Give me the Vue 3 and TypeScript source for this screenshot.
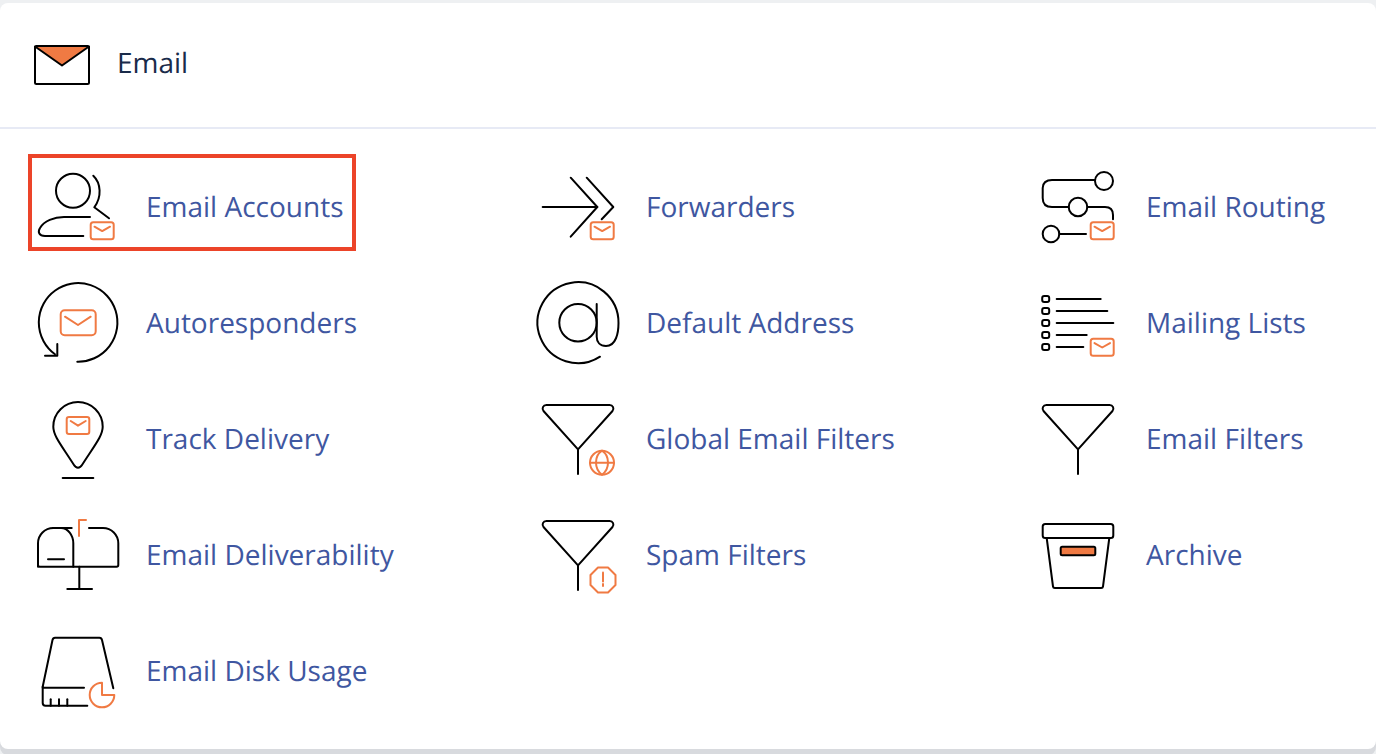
<template>
  <div class="page">
    <section class="card">
      <header class="head">
        <svg class="head-icon" viewBox="0 0 56 40">
          <path class="flap" d="M1 1.5 H55 L28 20.5 Z" />
          <rect class="ink" x="1" y="1" width="54" height="38" rx="1.5" />
          <path class="ink" d="M1 1.5 L28 20.5 L55 1.5" />
        </svg>
        <h2>Email</h2>
      </header>
      <div class="grid">
        <a v-for="tool in tools" :key="tool.name" class="tool" :class="{ picked: tool.picked }" href="#">
          <svg class="tool-icon" viewBox="0 0 100 100">
            <path v-for="d in tool.ink" :key="d" class="ink" :d="d" />
            <path v-if="tool.bar" class="bar" :d="tool.bar" />
            <path v-for="d in tool.accent" :key="d" class="accent" :d="d" />
          </svg>
          <span>{{ tool.name }}</span>
        </a>
      </div>
    </section>
  </div>
</template>

<script setup lang="ts">
interface Tool {
  name: string;
  ink: string[];
  accent: string[];
  bar?: string;
  picked?: boolean;
}

function circle(cx: number, cy: number, r: number) {
  return `M${cx - r} ${cy} a${r} ${r} 0 1 0 ${r * 2} 0 a${r} ${r} 0 1 0 ${-r * 2} 0 Z`;
}

// the little orange envelope in the lower right of most icons
const badge = (y = 65.3) => [
  `M65.2 ${y} H83.2 a2.5 2.5 0 0 1 2.5 2.5 V${y + 14.5} a2.5 2.5 0 0 1 -2.5 2.5 H65.2 a2.5 2.5 0 0 1 -2.5 -2.5 V${y + 2.5} a2.5 2.5 0 0 1 2.5 -2.5 Z`,
  `M66.5 ${y + 4.4} L74.2 ${y + 8.8} L82 ${y + 4.4}`
];

const funnel = 'M18.5 16 H81.5 C85 16 86.5 19.5 84.5 22 L50 60.3 L15.5 22 C13.5 19.5 15 16 18.5 16 Z M50 60.3 V85';

const tools: Tool[] = [
  {
    name: 'Email Accounts',
    picked: true,
    ink: [
      circle(45, 33.7, 17),
      'M65.3 18.7 C73 26 74 40 66.3 50.3 L81 61.3',
      'M55.3 79 H17 C11 79 9.5 75 12 71 C16 64 26 60 36 60 H62'
    ],
    accent: badge()
  },
  {
    name: 'Forwarders',
    ink: ['M14.7 50 H69.3', 'M42.7 20.7 L69.3 50 L42.7 79.7', 'M58.7 20.7 L85.3 50 L73.7 62.3'],
    accent: badge()
  },
  {
    name: 'Email Routing',
    ink: [
      circle(76, 24, 9),
      'M67 23 H24 C18 23 14.7 26 14.7 31 V41 C14.7 47 18 50 24 50 H40.7',
      circle(50, 50, 9.3),
      'M59.3 50 H77 C82 50 85 53 85 58 V62.3',
      circle(23, 77, 8.3),
      'M31.3 77 H58'
    ],
    accent: badge()
  },
  {
    name: 'Autoresponders',
    ink: ['M49.3 88.7 A39.3 39.3 0 1 0 27 81.2', 'M29.3 71 V82.7 H17'],
    accent: [
      'M36.7 37.3 H63.7 a4 4 0 0 1 4 4 V58.3 a4 4 0 0 1 -4 4 H36.7 a4 4 0 0 1 -4 -4 V41.3 a4 4 0 0 1 4 -4 Z',
      'M37 43.7 L50 52 L62.7 43.7'
    ]
  },
  {
    name: 'Default Address',
    ink: [
      'M72 83.7 A40.5 40.5 0 1 1 90.5 50 C90.5 60 88 73 78 73 C72 73 68.7 69 68.7 63.7 V31',
      circle(50, 49.7, 18.7)
    ],
    accent: []
  },
  {
    name: 'Mailing Lists',
    ink: [
      ...[26, 38, 50, 62, 74].map((y) => `M16.2 ${y - 3} h3 a2 2 0 0 1 2 2 v2 a2 2 0 0 1 -2 2 h-3 a2 2 0 0 1 -2 -2 v-2 a2 2 0 0 1 2 -2 Z`),
      'M28.7 26 H72.7',
      'M28.7 38 H79.3',
      'M28.7 50 H85.3',
      'M28.7 62 H58.7',
      'M28.7 74 H55.3'
    ],
    accent: badge(65.7)
  },
  {
    name: 'Track Delivery',
    ink: [
      'M50 13 A24.7 24.7 0 0 1 74.7 37.7 C74.7 47 66 57 54 76 C52 79.5 48 79.5 46 76 C34 57 25.3 47 25.3 37.7 A24.7 24.7 0 0 1 50 13 Z',
      'M34.7 89 H65.3'
    ],
    accent: [
      'M41 28 H59 a2.3 2.3 0 0 1 2.3 2.3 V42.7 a2.3 2.3 0 0 1 -2.3 2.3 H41 a2.3 2.3 0 0 1 -2.3 -2.3 V30.3 a2.3 2.3 0 0 1 2.3 -2.3 Z',
      'M42.7 32 L50 36.7 L57.7 32'
    ]
  },
  {
    name: 'Global Email Filters',
    ink: [funnel],
    accent: [circle(74, 73.7, 12), 'M62 73.7 H86', 'M74 61.7 C66 67 66 80 74 85.7 C82 80 82 67 74 61.7 Z']
  },
  { name: 'Email Filters', ink: [funnel], accent: [] },
  {
    name: 'Email Deliverability',
    ink: [
      'M10 61.7 V38.3 A15.3 15.3 0 0 1 25.3 23 H33 A12.5 15.3 0 0 1 45.3 38.3 V61.7',
      'M25 23 H43.7',
      'M61 23 H75 A15.3 15.3 0 0 1 90.3 38.3 V60 Q90.3 61.7 88.6 61.7 H11.7 Q10 61.7 10 60',
      'M20 54.3 H36',
      'M51.3 61.7 V84',
      'M39.3 84 H64'
    ],
    accent: ['M51 31 V15 H58']
  },
  {
    name: 'Spam Filters',
    ink: [funnel],
    accent: ['M70 62.5 H80 L87.5 70 V80 L80 87.5 H70 L62.5 80 V70 Z', 'M75 67.5 V76.5', 'M75 79 V81']
  },
  {
    name: 'Archive',
    ink: [
      'M17.2 19 H82.8 a2.5 2.5 0 0 1 2.5 2.5 V30.5 a2.5 2.5 0 0 1 -2.5 2.5 H17.2 a2.5 2.5 0 0 1 -2.5 -2.5 V21.5 a2.5 2.5 0 0 1 2.5 -2.5 Z',
      'M18.7 33 L25 81.5 Q25.2 83 26.8 83 H73.2 Q74.8 83 75 81.5 L81.3 33'
    ],
    bar: 'M34.2 41.7 H65.8 a1.5 1.5 0 0 1 1.5 1.5 V48.8 a1.5 1.5 0 0 1 -1.5 1.5 H34.2 a1.5 1.5 0 0 1 -1.5 -1.5 V43.2 a1.5 1.5 0 0 1 1.5 -1.5 Z',
    accent: []
  },
  {
    name: 'Email Disk Usage',
    ink: [
      'M14.7 65.7 L24.5 19 Q25 16.7 27 16.7 H71.5 Q73.5 16.7 74 19 L85.3 67.3',
      'M14.7 66.7 H56',
      'M14.7 65.7 V82 Q14.7 84.7 17.5 84.7 H59.3',
      'M22.7 78.3 V84.7',
      'M31 78.3 V84.7',
      'M39.3 78.3 V84.7'
    ],
    accent: ['M74 74 V61.7 A12.3 12.3 0 1 0 86.3 74 Z']
  }
];
</script>

<style scoped>
.page {
  padding: 3px 0 5px;
  height: 754px;
  box-sizing: border-box;
  font-family: "Open Sans", "Noto Sans", sans-serif;
  text-rendering: geometricPrecision;
  font-kerning: normal;
}

.card {
  height: 100%;
  background: #fff;
  border-radius: 8px;
  box-shadow: 0 6px 0 #d8dade;
}

.head {
  display: flex;
  align-items: center;
  gap: 27px;
  height: 126px;
  padding-left: 34px;
  box-sizing: border-box;
  border-bottom: 2px solid #e7eaf5;
}

.head-icon {
  width: 56px;
  height: 40px;
}

h2 {
  margin: 0 0 4px;
  font-size: 28px;
  font-weight: 400;
  color: #1a2b4a;
}

.grid {
  display: grid;
  grid-template-columns: repeat(3, 500px);
  grid-auto-rows: 116px;
  margin-top: 20px;
}

.tool {
  display: flex;
  align-items: center;
  justify-self: start;
  align-self: start;
  gap: 18px;
  margin: 5px 0 0 28px;
  height: 97px;
  padding: 9px 8px 0 0;
  box-sizing: border-box;
  border: 4px solid transparent;
  color: #3f57a1;
  font-size: 28px;
  text-decoration: none;
}

.tool.picked {
  border-color: #ec4429;
}

.tool-icon {
  width: 100px;
  height: 100px;
  margin-left: -4px;
  flex: none;
}

path,
rect {
  fill: none;
  stroke-width: 2;
  stroke-linecap: round;
  stroke-linejoin: round;
}

.ink {
  stroke: #000;
}

.accent {
  stroke: #f07a43;
}

.bar {
  fill: #f07a43;
  stroke: #000;
}

.flap {
  fill: #f07a43;
  stroke: none;
}
</style>

<style>
html,
body {
  margin: 0;
  background: #eef0f2;
  overflow: hidden;
}
</style>
